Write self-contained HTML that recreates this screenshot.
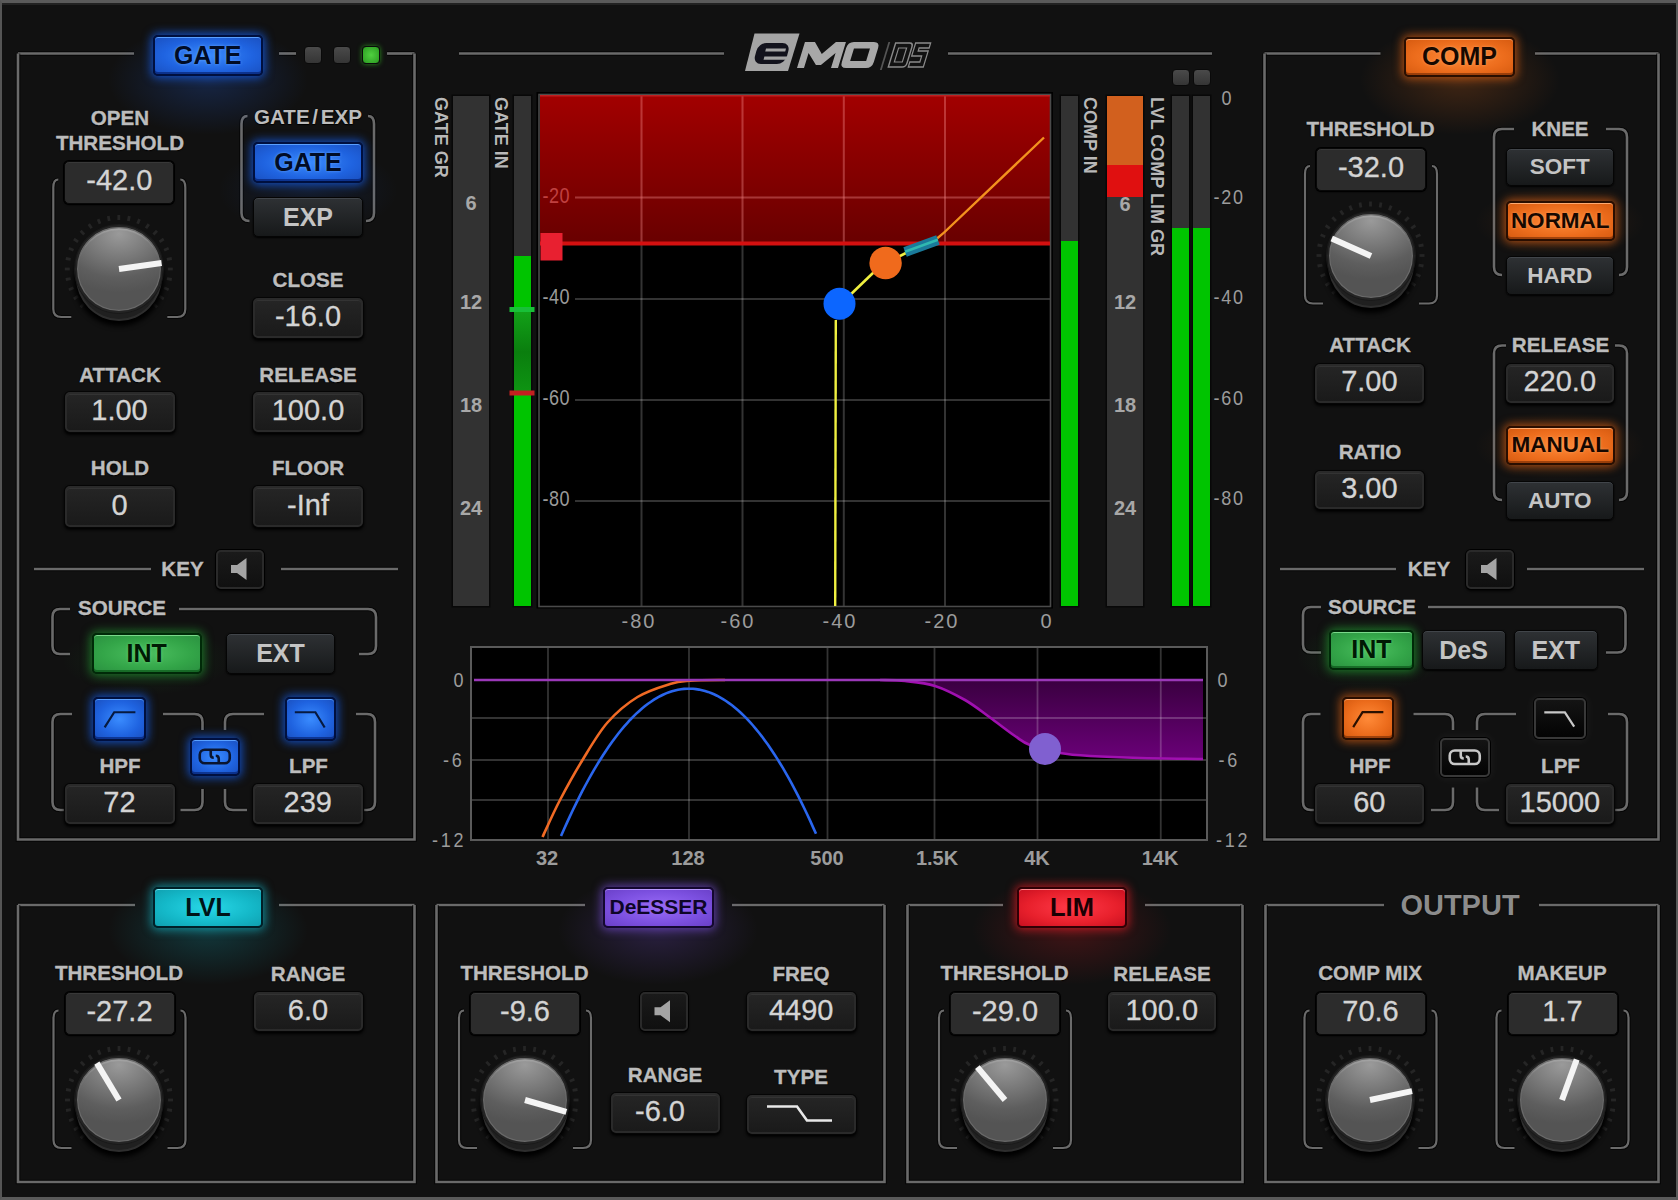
<!DOCTYPE html><html><head><meta charset="utf-8"><style>
*{margin:0;padding:0;box-sizing:border-box}
html,body{width:1678px;height:1200px;overflow:hidden;background:#111111}
body{position:relative;font-family:"Liberation Sans",sans-serif}
.t{position:absolute;white-space:nowrap;line-height:1}
.vb,.vbf,.b{position:absolute;text-align:center;white-space:nowrap;border-radius:5px}
.vb{background:linear-gradient(#252525,#1a1a1a);border:2px solid #2a2a2a;box-shadow:0 0 0 1px #050505,0 2px 3px 1px #000,inset 0 1px 0 #333;color:#d4d4d4;-webkit-text-stroke:0.3px #d4d4d4}
.vbf{background:#2c2c2c;border:1.5px solid #080808;box-shadow:0 0 0 1px #000,0 1px 2px #000,inset 0 1px 0 #383838;color:#d4d4d4;-webkit-text-stroke:0.3px #d4d4d4}
.b{font-weight:bold;border:1.5px solid #050505}
.b.blue,.b.orange,.b.green,.b.cyan,.b.purple,.b.red{border-width:2px}
.b.blue{text-shadow:0 0 3px rgba(110,170,255,.8)}
.b.orange{text-shadow:0 0 3px rgba(255,170,110,.7)}
.b.green{text-shadow:0 0 3px rgba(120,230,140,.6)}
.b.off{background:linear-gradient(#2e3134,#17191a);box-shadow:inset 0 1px 0 #41454a,0 1px 2px #000;color:#c4c4c4}
.b.blue{background:radial-gradient(ellipse at center,#3a8cff 0%,#1f63e0 60%,#1a50c0 100%);border-color:#001040;color:#000c26;box-shadow:0 0 10px 2px rgba(20,100,255,.7),inset 0 1px 0 #5aa0ff,inset 0 -2px 0 rgba(0,20,90,.55)}
.b.orange{background:radial-gradient(ellipse at center,#ff8a38 0%,#ec6c1c 60%,#d55a10 100%);border-color:#2a0e00;color:#160800;box-shadow:0 0 10px 2px rgba(255,110,20,.6),inset 0 1px 0 #ffaa70,inset 0 -2px 0 rgba(90,30,0,.5)}
.b.green{background:radial-gradient(ellipse at center,#4cc060 0%,#33a548 60%,#2a9040 100%);border-color:#002a08;color:#001a04;box-shadow:0 0 10px 2px rgba(40,200,60,.5),inset 0 1px 0 #7ad88a,inset 0 -2px 0 rgba(0,60,10,.5)}
.b.cyan{background:radial-gradient(ellipse at center,#28d8e8 0%,#14b8c8 60%,#10a0b0 100%);border-color:#002028;color:#001418;box-shadow:0 0 10px 2px rgba(20,210,230,.55),inset 0 1px 0 #80eef8}
.b.purple{background:radial-gradient(ellipse at center,#9a6cf8 0%,#7c50e0 60%,#6a40c8 100%);border-color:#140830;color:#0e0628;box-shadow:0 0 10px 2px rgba(140,90,255,.55),inset 0 1px 0 #b898ff}
.b.red{background:radial-gradient(ellipse at center,#ff3a48 0%,#e8202c 60%,#c81020 100%);border-color:#300005;color:#1a0003;box-shadow:0 0 10px 2px rgba(255,30,40,.6),inset 0 1px 0 #ff8a90}
.b.black{background:linear-gradient(#141414,#030303);border:2.5px solid #383838;box-shadow:0 0 0 1px #000,0 0 10px 2px rgba(255,255,255,.05)}
.led{position:absolute;width:18px;height:18px;border-radius:4px;background:linear-gradient(#4a4a4a,#353535);border:1px solid #0a0a0a}
.led.gn{background:radial-gradient(#50d040,#2a9a20);box-shadow:0 0 5px rgba(60,220,40,.6)}
.kn{position:absolute;border-radius:50%;background:radial-gradient(ellipse 90% 70% at 50% 8%,#9a9a9a 0%,#7a7a7a 40%,#5e5e5e 75%,#545454 100%);border:2.5px solid #242424;box-shadow:inset 0 0 0 1.2px #6a6a6a,inset 0 3px 1px rgba(255,255,255,.15),0 0 0 1px #1a1a1a}
.ks{position:absolute;border-radius:50%;background:#202020;border:2px solid #2e2e2e;box-shadow:0 3px 5px 2px #000}
.kp{position:absolute;width:6px;background:#f4f4f4;transform-origin:50% 100%}
.vt{writing-mode:vertical-rl;font-weight:bold;color:#b8b8b8;line-height:1;text-shadow:0 0 1px #000}
.spk{position:absolute;border-radius:5px;background:linear-gradient(#1a1a1a,#101010);border:2px solid #2a2a2a;box-shadow:0 0 0 1px #000,0 2px 3px #000}
</style></head><body><div style="position:absolute;left:0;top:0;width:1678px;height:1200px;border-top:3px solid #5a5a5a;border-left:2px solid #555;border-right:2px solid #5a5a5a;border-bottom:3px solid #5a5a5a"></div><div style="position:absolute;left:2px;top:3px;width:1674px;height:2px;background:#222"></div><svg width="1678" height="1200" style="position:absolute;left:0;top:0"><line x1="18" y1="53.5" x2="134" y2="53.5" stroke="#000" stroke-width="4.7" stroke-opacity=".7"/><line x1="18" y1="53.5" x2="134" y2="53.5" stroke="#6a6a6a" stroke-width="2.7"/><line x1="279" y1="53.5" x2="296" y2="53.5" stroke="#000" stroke-width="4.7" stroke-opacity=".7"/><line x1="279" y1="53.5" x2="296" y2="53.5" stroke="#6a6a6a" stroke-width="2.7"/><line x1="387" y1="53.5" x2="414.5" y2="53.5" stroke="#000" stroke-width="4.7" stroke-opacity=".7"/><line x1="387" y1="53.5" x2="414.5" y2="53.5" stroke="#6a6a6a" stroke-width="2.7"/><path d="M414.5,53.5 L414.5,839.5 L18,839.5 L18,53.5" fill="none" stroke="#000" stroke-width="4.6" stroke-opacity=".7"/><path d="M414.5,53.5 L414.5,839.5 L18,839.5 L18,53.5" fill="none" stroke="#6a6a6a" stroke-width="2.6"/><line x1="1264.5" y1="53.5" x2="1380.5" y2="53.5" stroke="#000" stroke-width="4.7" stroke-opacity=".7"/><line x1="1264.5" y1="53.5" x2="1380.5" y2="53.5" stroke="#6a6a6a" stroke-width="2.7"/><line x1="1535" y1="53.5" x2="1658.5" y2="53.5" stroke="#000" stroke-width="4.7" stroke-opacity=".7"/><line x1="1535" y1="53.5" x2="1658.5" y2="53.5" stroke="#6a6a6a" stroke-width="2.7"/><path d="M1658.5,53.5 L1658.5,839.5 L1264.5,839.5 L1264.5,53.5" fill="none" stroke="#000" stroke-width="4.6" stroke-opacity=".7"/><path d="M1658.5,53.5 L1658.5,839.5 L1264.5,839.5 L1264.5,53.5" fill="none" stroke="#6a6a6a" stroke-width="2.6"/><line x1="18" y1="905" x2="135" y2="905" stroke="#000" stroke-width="4.7" stroke-opacity=".7"/><line x1="18" y1="905" x2="135" y2="905" stroke="#6a6a6a" stroke-width="2.7"/><line x1="279" y1="905" x2="414.5" y2="905" stroke="#000" stroke-width="4.7" stroke-opacity=".7"/><line x1="279" y1="905" x2="414.5" y2="905" stroke="#6a6a6a" stroke-width="2.7"/><path d="M414.5,905 L414.5,1182 L18,1182 L18,905" fill="none" stroke="#000" stroke-width="4.6" stroke-opacity=".7"/><path d="M414.5,905 L414.5,1182 L18,1182 L18,905" fill="none" stroke="#6a6a6a" stroke-width="2.6"/><line x1="436.5" y1="905" x2="585" y2="905" stroke="#000" stroke-width="4.7" stroke-opacity=".7"/><line x1="436.5" y1="905" x2="585" y2="905" stroke="#6a6a6a" stroke-width="2.7"/><line x1="732" y1="905" x2="884.5" y2="905" stroke="#000" stroke-width="4.7" stroke-opacity=".7"/><line x1="732" y1="905" x2="884.5" y2="905" stroke="#6a6a6a" stroke-width="2.7"/><path d="M884.5,905 L884.5,1182 L436.5,1182 L436.5,905" fill="none" stroke="#000" stroke-width="4.6" stroke-opacity=".7"/><path d="M884.5,905 L884.5,1182 L436.5,1182 L436.5,905" fill="none" stroke="#6a6a6a" stroke-width="2.6"/><line x1="907.5" y1="905" x2="1003" y2="905" stroke="#000" stroke-width="4.7" stroke-opacity=".7"/><line x1="907.5" y1="905" x2="1003" y2="905" stroke="#6a6a6a" stroke-width="2.7"/><line x1="1145" y1="905" x2="1242.5" y2="905" stroke="#000" stroke-width="4.7" stroke-opacity=".7"/><line x1="1145" y1="905" x2="1242.5" y2="905" stroke="#6a6a6a" stroke-width="2.7"/><path d="M1242.5,905 L1242.5,1182 L907.5,1182 L907.5,905" fill="none" stroke="#000" stroke-width="4.6" stroke-opacity=".7"/><path d="M1242.5,905 L1242.5,1182 L907.5,1182 L907.5,905" fill="none" stroke="#6a6a6a" stroke-width="2.6"/><line x1="1265.5" y1="905" x2="1384" y2="905" stroke="#000" stroke-width="4.7" stroke-opacity=".7"/><line x1="1265.5" y1="905" x2="1384" y2="905" stroke="#6a6a6a" stroke-width="2.7"/><line x1="1539" y1="905" x2="1658.5" y2="905" stroke="#000" stroke-width="4.7" stroke-opacity=".7"/><line x1="1539" y1="905" x2="1658.5" y2="905" stroke="#6a6a6a" stroke-width="2.7"/><path d="M1658.5,905 L1658.5,1182 L1265.5,1182 L1265.5,905" fill="none" stroke="#000" stroke-width="4.6" stroke-opacity=".7"/><path d="M1658.5,905 L1658.5,1182 L1265.5,1182 L1265.5,905" fill="none" stroke="#6a6a6a" stroke-width="2.6"/><line x1="459" y1="53.5" x2="724" y2="53.5" stroke="#000" stroke-width="4.7" stroke-opacity=".7"/><line x1="459" y1="53.5" x2="724" y2="53.5" stroke="#6a6a6a" stroke-width="2.7"/><line x1="948" y1="53.5" x2="1212" y2="53.5" stroke="#000" stroke-width="4.7" stroke-opacity=".7"/><line x1="948" y1="53.5" x2="1212" y2="53.5" stroke="#6a6a6a" stroke-width="2.7"/><path d="M58.3,179.5 Q53.3,179.5 53.3,187.5 L53.3,309 Q53.3,317 61.3,317 L71.3,317" fill="none" stroke="#000" stroke-width="4.2" stroke-opacity=".7"/><path d="M58.3,179.5 Q53.3,179.5 53.3,187.5 L53.3,309 Q53.3,317 61.3,317 L71.3,317" fill="none" stroke="#6a6a6a" stroke-width="2.2"/><path d="M180.3,179.5 Q185.3,179.5 185.3,187.5 L185.3,309 Q185.3,317 177.3,317 L167.3,317" fill="none" stroke="#000" stroke-width="4.2" stroke-opacity=".7"/><path d="M180.3,179.5 Q185.3,179.5 185.3,187.5 L185.3,309 Q185.3,317 177.3,317 L167.3,317" fill="none" stroke="#6a6a6a" stroke-width="2.2"/><line x1="84.2" y1="303.6" x2="80.6" y2="307.2" stroke="#252525" stroke-width="2.8"/><line x1="78.1" y1="296.2" x2="73.9" y2="299.0" stroke="#252525" stroke-width="2.8"/><line x1="73.5" y1="287.8" x2="68.9" y2="289.7" stroke="#252525" stroke-width="2.8"/><line x1="70.7" y1="278.6" x2="65.8" y2="279.5" stroke="#252525" stroke-width="2.8"/><line x1="69.8" y1="269.0" x2="64.8" y2="269.0" stroke="#252525" stroke-width="2.8"/><line x1="70.7" y1="259.4" x2="65.8" y2="258.5" stroke="#252525" stroke-width="2.8"/><line x1="73.5" y1="250.2" x2="68.9" y2="248.3" stroke="#252525" stroke-width="2.8"/><line x1="78.1" y1="241.8" x2="73.9" y2="239.0" stroke="#252525" stroke-width="2.8"/><line x1="84.2" y1="234.4" x2="80.6" y2="230.8" stroke="#252525" stroke-width="2.8"/><line x1="91.6" y1="228.3" x2="88.8" y2="224.1" stroke="#252525" stroke-width="2.8"/><line x1="100.0" y1="223.7" x2="98.1" y2="219.1" stroke="#252525" stroke-width="2.8"/><line x1="109.2" y1="220.9" x2="108.3" y2="216.0" stroke="#252525" stroke-width="2.8"/><line x1="118.8" y1="220.0" x2="118.8" y2="215.0" stroke="#252525" stroke-width="2.8"/><line x1="128.4" y1="220.9" x2="129.3" y2="216.0" stroke="#252525" stroke-width="2.8"/><line x1="137.6" y1="223.7" x2="139.5" y2="219.1" stroke="#252525" stroke-width="2.8"/><line x1="146.0" y1="228.3" x2="148.8" y2="224.1" stroke="#252525" stroke-width="2.8"/><line x1="153.4" y1="234.4" x2="157.0" y2="230.8" stroke="#252525" stroke-width="2.8"/><line x1="159.5" y1="241.8" x2="163.7" y2="239.0" stroke="#252525" stroke-width="2.8"/><line x1="164.1" y1="250.2" x2="168.7" y2="248.3" stroke="#252525" stroke-width="2.8"/><line x1="166.9" y1="259.4" x2="171.8" y2="258.5" stroke="#252525" stroke-width="2.8"/><line x1="167.8" y1="269.0" x2="172.8" y2="269.0" stroke="#252525" stroke-width="2.8"/><line x1="166.9" y1="278.6" x2="171.8" y2="279.5" stroke="#252525" stroke-width="2.8"/><line x1="164.1" y1="287.8" x2="168.7" y2="289.7" stroke="#252525" stroke-width="2.8"/><line x1="159.5" y1="296.2" x2="163.7" y2="299.0" stroke="#252525" stroke-width="2.8"/><line x1="153.4" y1="303.6" x2="157.0" y2="307.2" stroke="#252525" stroke-width="2.8"/><path d="M247.5,116 Q241.5,116 241.5,124 L241.5,213 Q241.5,221 249.5,221 L249.5,221" fill="none" stroke="#000" stroke-width="4.6" stroke-opacity=".7"/><path d="M247.5,116 Q241.5,116 241.5,124 L241.5,213 Q241.5,221 249.5,221 L249.5,221" fill="none" stroke="#6a6a6a" stroke-width="2.6"/><path d="M368,116 Q374,116 374,124 L374,213 Q374,221 366,221 L366,221" fill="none" stroke="#000" stroke-width="4.6" stroke-opacity=".7"/><path d="M368,116 Q374,116 374,124 L374,213 Q374,221 366,221 L366,221" fill="none" stroke="#6a6a6a" stroke-width="2.6"/><line x1="34" y1="569" x2="151" y2="569" stroke="#000" stroke-width="4.7" stroke-opacity=".7"/><line x1="34" y1="569" x2="151" y2="569" stroke="#6a6a6a" stroke-width="2.7"/><line x1="281" y1="569" x2="398" y2="569" stroke="#000" stroke-width="4.7" stroke-opacity=".7"/><line x1="281" y1="569" x2="398" y2="569" stroke="#6a6a6a" stroke-width="2.7"/><path d="M70,609 L60,609 Q52.5,609 52.5,617 L52.5,646 Q52.5,654 60,654 L70,654" fill="none" stroke="#000" stroke-width="4.6" stroke-opacity=".7"/><path d="M70,609 L60,609 Q52.5,609 52.5,617 L52.5,646 Q52.5,654 60,654 L70,654" fill="none" stroke="#6a6a6a" stroke-width="2.6"/><path d="M179,609 L368,609 Q376,609 376,617 L376,646 Q376,654 368,654 L359,654" fill="none" stroke="#000" stroke-width="4.6" stroke-opacity=".7"/><path d="M179,609 L368,609 Q376,609 376,617 L376,646 Q376,654 368,654 L359,654" fill="none" stroke="#6a6a6a" stroke-width="2.6"/><path d="M72,714 L60.5,714 Q52.5,714 52.5,722 L52.5,802 Q52.5,810 60.5,810 L70.5,810" fill="none" stroke="#000" stroke-width="4.6" stroke-opacity=".7"/><path d="M72,714 L60.5,714 Q52.5,714 52.5,722 L52.5,802 Q52.5,810 60.5,810 L70.5,810" fill="none" stroke="#6a6a6a" stroke-width="2.6"/><path d="M163,714 L194.5,714 Q202.5,714 202.5,722 L202.5,730" fill="none" stroke="#000" stroke-width="4.6" stroke-opacity=".7"/><path d="M163,714 L194.5,714 Q202.5,714 202.5,722 L202.5,730" fill="none" stroke="#6a6a6a" stroke-width="2.6"/><path d="M202.5,789 L202.5,802 Q202.5,810 194.5,810 L180.5,810" fill="none" stroke="#000" stroke-width="4.6" stroke-opacity=".7"/><path d="M202.5,789 L202.5,802 Q202.5,810 194.5,810 L180.5,810" fill="none" stroke="#6a6a6a" stroke-width="2.6"/><path d="M264,714 L233,714 Q225,714 225,722 L225,730" fill="none" stroke="#000" stroke-width="4.6" stroke-opacity=".7"/><path d="M264,714 L233,714 Q225,714 225,722 L225,730" fill="none" stroke="#6a6a6a" stroke-width="2.6"/><path d="M225,789 L225,802 Q225,810 233,810 L247,810" fill="none" stroke="#000" stroke-width="4.6" stroke-opacity=".7"/><path d="M225,789 L225,802 Q225,810 233,810 L247,810" fill="none" stroke="#6a6a6a" stroke-width="2.6"/><path d="M356,714 L367,714 Q375,714 375,722 L375,802 Q375,810 367,810 L357,810" fill="none" stroke="#000" stroke-width="4.6" stroke-opacity=".7"/><path d="M356,714 L367,714 Q375,714 375,722 L375,802 Q375,810 367,810 L357,810" fill="none" stroke="#6a6a6a" stroke-width="2.6"/><path d="M1310.0,166.0 Q1305.0,166.0 1305.0,174.0 L1305.0,295.5 Q1305.0,303.5 1313.0,303.5 L1323.0,303.5" fill="none" stroke="#000" stroke-width="4.2" stroke-opacity=".7"/><path d="M1310.0,166.0 Q1305.0,166.0 1305.0,174.0 L1305.0,295.5 Q1305.0,303.5 1313.0,303.5 L1323.0,303.5" fill="none" stroke="#6a6a6a" stroke-width="2.2"/><path d="M1432.0,166.0 Q1437.0,166.0 1437.0,174.0 L1437.0,295.5 Q1437.0,303.5 1429.0,303.5 L1419.0,303.5" fill="none" stroke="#000" stroke-width="4.2" stroke-opacity=".7"/><path d="M1432.0,166.0 Q1437.0,166.0 1437.0,174.0 L1437.0,295.5 Q1437.0,303.5 1429.0,303.5 L1419.0,303.5" fill="none" stroke="#6a6a6a" stroke-width="2.2"/><line x1="1335.9" y1="290.1" x2="1332.3" y2="293.7" stroke="#252525" stroke-width="2.8"/><line x1="1329.8" y1="282.7" x2="1325.6" y2="285.5" stroke="#252525" stroke-width="2.8"/><line x1="1325.2" y1="274.3" x2="1320.6" y2="276.2" stroke="#252525" stroke-width="2.8"/><line x1="1322.4" y1="265.1" x2="1317.5" y2="266.0" stroke="#252525" stroke-width="2.8"/><line x1="1321.5" y1="255.5" x2="1316.5" y2="255.5" stroke="#252525" stroke-width="2.8"/><line x1="1322.4" y1="245.9" x2="1317.5" y2="245.0" stroke="#252525" stroke-width="2.8"/><line x1="1325.2" y1="236.7" x2="1320.6" y2="234.8" stroke="#252525" stroke-width="2.8"/><line x1="1329.8" y1="228.3" x2="1325.6" y2="225.5" stroke="#252525" stroke-width="2.8"/><line x1="1335.9" y1="220.9" x2="1332.3" y2="217.3" stroke="#252525" stroke-width="2.8"/><line x1="1343.3" y1="214.8" x2="1340.5" y2="210.6" stroke="#252525" stroke-width="2.8"/><line x1="1351.7" y1="210.2" x2="1349.8" y2="205.6" stroke="#252525" stroke-width="2.8"/><line x1="1360.9" y1="207.4" x2="1360.0" y2="202.5" stroke="#252525" stroke-width="2.8"/><line x1="1370.5" y1="206.5" x2="1370.5" y2="201.5" stroke="#252525" stroke-width="2.8"/><line x1="1380.1" y1="207.4" x2="1381.0" y2="202.5" stroke="#252525" stroke-width="2.8"/><line x1="1389.3" y1="210.2" x2="1391.2" y2="205.6" stroke="#252525" stroke-width="2.8"/><line x1="1397.7" y1="214.8" x2="1400.5" y2="210.6" stroke="#252525" stroke-width="2.8"/><line x1="1405.1" y1="220.9" x2="1408.7" y2="217.3" stroke="#252525" stroke-width="2.8"/><line x1="1411.2" y1="228.3" x2="1415.4" y2="225.5" stroke="#252525" stroke-width="2.8"/><line x1="1415.8" y1="236.7" x2="1420.4" y2="234.8" stroke="#252525" stroke-width="2.8"/><line x1="1418.6" y1="245.9" x2="1423.5" y2="245.0" stroke="#252525" stroke-width="2.8"/><line x1="1419.5" y1="255.5" x2="1424.5" y2="255.5" stroke="#252525" stroke-width="2.8"/><line x1="1418.6" y1="265.1" x2="1423.5" y2="266.0" stroke="#252525" stroke-width="2.8"/><line x1="1415.8" y1="274.3" x2="1420.4" y2="276.2" stroke="#252525" stroke-width="2.8"/><line x1="1411.2" y1="282.7" x2="1415.4" y2="285.5" stroke="#252525" stroke-width="2.8"/><line x1="1405.1" y1="290.1" x2="1408.7" y2="293.7" stroke="#252525" stroke-width="2.8"/><path d="M1514,129 L1502,129 Q1494,129 1494,137 L1494,267 Q1494,275 1502,275" fill="none" stroke="#000" stroke-width="4.6" stroke-opacity=".7"/><path d="M1514,129 L1502,129 Q1494,129 1494,137 L1494,267 Q1494,275 1502,275" fill="none" stroke="#6a6a6a" stroke-width="2.6"/><path d="M1606,129 L1619,129 Q1627,129 1627,137 L1627,267 Q1627,275 1619,275" fill="none" stroke="#000" stroke-width="4.6" stroke-opacity=".7"/><path d="M1606,129 L1619,129 Q1627,129 1627,137 L1627,267 Q1627,275 1619,275" fill="none" stroke="#6a6a6a" stroke-width="2.6"/><path d="M1506,345.5 L1502,345.5 Q1494,345.5 1494,353.5 L1494,492 Q1494,500 1502,500" fill="none" stroke="#000" stroke-width="4.6" stroke-opacity=".7"/><path d="M1506,345.5 L1502,345.5 Q1494,345.5 1494,353.5 L1494,492 Q1494,500 1502,500" fill="none" stroke="#6a6a6a" stroke-width="2.6"/><path d="M1615,345.5 L1619,345.5 Q1627,345.5 1627,353.5 L1627,492 Q1627,500 1619,500" fill="none" stroke="#000" stroke-width="4.6" stroke-opacity=".7"/><path d="M1615,345.5 L1619,345.5 Q1627,345.5 1627,353.5 L1627,492 Q1627,500 1619,500" fill="none" stroke="#6a6a6a" stroke-width="2.6"/><line x1="1280" y1="569" x2="1396" y2="569" stroke="#000" stroke-width="4.7" stroke-opacity=".7"/><line x1="1280" y1="569" x2="1396" y2="569" stroke="#6a6a6a" stroke-width="2.7"/><line x1="1527" y1="569" x2="1644" y2="569" stroke="#000" stroke-width="4.7" stroke-opacity=".7"/><line x1="1527" y1="569" x2="1644" y2="569" stroke="#6a6a6a" stroke-width="2.7"/><path d="M1321,607 L1311,607 Q1303,607 1303,615 L1303,644.5 Q1303,652.5 1311,652.5 L1321,652.5" fill="none" stroke="#000" stroke-width="4.6" stroke-opacity=".7"/><path d="M1321,607 L1311,607 Q1303,607 1303,615 L1303,644.5 Q1303,652.5 1311,652.5 L1321,652.5" fill="none" stroke="#6a6a6a" stroke-width="2.6"/><path d="M1428,607 L1617.5,607 Q1625.5,607 1625.5,615 L1625.5,644.5 Q1625.5,652.5 1617.5,652.5 L1606,652.5" fill="none" stroke="#000" stroke-width="4.6" stroke-opacity=".7"/><path d="M1428,607 L1617.5,607 Q1625.5,607 1625.5,615 L1625.5,644.5 Q1625.5,652.5 1617.5,652.5 L1606,652.5" fill="none" stroke="#6a6a6a" stroke-width="2.6"/><path d="M1320.5,714 L1311,714 Q1303,714 1303,722 L1303,802 Q1303,810 1311,810 L1321,810" fill="none" stroke="#000" stroke-width="4.6" stroke-opacity=".7"/><path d="M1320.5,714 L1311,714 Q1303,714 1303,722 L1303,802 Q1303,810 1311,810 L1321,810" fill="none" stroke="#6a6a6a" stroke-width="2.6"/><path d="M1413.5,714 L1445,714 Q1453,714 1453,722 L1453,730" fill="none" stroke="#000" stroke-width="4.6" stroke-opacity=".7"/><path d="M1413.5,714 L1445,714 Q1453,714 1453,722 L1453,730" fill="none" stroke="#6a6a6a" stroke-width="2.6"/><path d="M1453,787.5 L1453,802 Q1453,810 1445,810 L1431,810" fill="none" stroke="#000" stroke-width="4.6" stroke-opacity=".7"/><path d="M1453,787.5 L1453,802 Q1453,810 1445,810 L1431,810" fill="none" stroke="#6a6a6a" stroke-width="2.6"/><path d="M1516,714 L1485,714 Q1477,714 1477,722 L1477,730" fill="none" stroke="#000" stroke-width="4.6" stroke-opacity=".7"/><path d="M1516,714 L1485,714 Q1477,714 1477,722 L1477,730" fill="none" stroke="#6a6a6a" stroke-width="2.6"/><path d="M1477,787.5 L1477,802 Q1477,810 1485,810 L1499,810" fill="none" stroke="#000" stroke-width="4.6" stroke-opacity=".7"/><path d="M1477,787.5 L1477,802 Q1477,810 1485,810 L1499,810" fill="none" stroke="#6a6a6a" stroke-width="2.6"/><path d="M1608,714 L1619,714 Q1627,714 1627,722 L1627,802 Q1627,810 1619,810 L1609,810" fill="none" stroke="#000" stroke-width="4.6" stroke-opacity=".7"/><path d="M1608,714 L1619,714 Q1627,714 1627,722 L1627,802 Q1627,810 1619,810 L1609,810" fill="none" stroke="#6a6a6a" stroke-width="2.6"/><path d="M58.5,1010.5 Q53.5,1010.5 53.5,1018.5 L53.5,1140 Q53.5,1148 61.5,1148 L71.5,1148" fill="none" stroke="#000" stroke-width="4.2" stroke-opacity=".7"/><path d="M58.5,1010.5 Q53.5,1010.5 53.5,1018.5 L53.5,1140 Q53.5,1148 61.5,1148 L71.5,1148" fill="none" stroke="#6a6a6a" stroke-width="2.2"/><path d="M180.5,1010.5 Q185.5,1010.5 185.5,1018.5 L185.5,1140 Q185.5,1148 177.5,1148 L167.5,1148" fill="none" stroke="#000" stroke-width="4.2" stroke-opacity=".7"/><path d="M180.5,1010.5 Q185.5,1010.5 185.5,1018.5 L185.5,1140 Q185.5,1148 177.5,1148 L167.5,1148" fill="none" stroke="#6a6a6a" stroke-width="2.2"/><line x1="84.4" y1="1134.6" x2="80.8" y2="1138.2" stroke="#252525" stroke-width="2.8"/><line x1="78.3" y1="1127.2" x2="74.1" y2="1130.0" stroke="#252525" stroke-width="2.8"/><line x1="73.7" y1="1118.8" x2="69.1" y2="1120.7" stroke="#252525" stroke-width="2.8"/><line x1="70.9" y1="1109.6" x2="66.0" y2="1110.5" stroke="#252525" stroke-width="2.8"/><line x1="70.0" y1="1100.0" x2="65.0" y2="1100.0" stroke="#252525" stroke-width="2.8"/><line x1="70.9" y1="1090.4" x2="66.0" y2="1089.5" stroke="#252525" stroke-width="2.8"/><line x1="73.7" y1="1081.2" x2="69.1" y2="1079.3" stroke="#252525" stroke-width="2.8"/><line x1="78.3" y1="1072.8" x2="74.1" y2="1070.0" stroke="#252525" stroke-width="2.8"/><line x1="84.4" y1="1065.4" x2="80.8" y2="1061.8" stroke="#252525" stroke-width="2.8"/><line x1="91.8" y1="1059.3" x2="89.0" y2="1055.1" stroke="#252525" stroke-width="2.8"/><line x1="100.2" y1="1054.7" x2="98.3" y2="1050.1" stroke="#252525" stroke-width="2.8"/><line x1="109.4" y1="1051.9" x2="108.5" y2="1047.0" stroke="#252525" stroke-width="2.8"/><line x1="119.0" y1="1051.0" x2="119.0" y2="1046.0" stroke="#252525" stroke-width="2.8"/><line x1="128.6" y1="1051.9" x2="129.5" y2="1047.0" stroke="#252525" stroke-width="2.8"/><line x1="137.8" y1="1054.7" x2="139.7" y2="1050.1" stroke="#252525" stroke-width="2.8"/><line x1="146.2" y1="1059.3" x2="149.0" y2="1055.1" stroke="#252525" stroke-width="2.8"/><line x1="153.6" y1="1065.4" x2="157.2" y2="1061.8" stroke="#252525" stroke-width="2.8"/><line x1="159.7" y1="1072.8" x2="163.9" y2="1070.0" stroke="#252525" stroke-width="2.8"/><line x1="164.3" y1="1081.2" x2="168.9" y2="1079.3" stroke="#252525" stroke-width="2.8"/><line x1="167.1" y1="1090.4" x2="172.0" y2="1089.5" stroke="#252525" stroke-width="2.8"/><line x1="168.0" y1="1100.0" x2="173.0" y2="1100.0" stroke="#252525" stroke-width="2.8"/><line x1="167.1" y1="1109.6" x2="172.0" y2="1110.5" stroke="#252525" stroke-width="2.8"/><line x1="164.3" y1="1118.8" x2="168.9" y2="1120.7" stroke="#252525" stroke-width="2.8"/><line x1="159.7" y1="1127.2" x2="163.9" y2="1130.0" stroke="#252525" stroke-width="2.8"/><line x1="153.6" y1="1134.6" x2="157.2" y2="1138.2" stroke="#252525" stroke-width="2.8"/><path d="M464.0,1010.5 Q459.0,1010.5 459.0,1018.5 L459.0,1140 Q459.0,1148 467.0,1148 L477.0,1148" fill="none" stroke="#000" stroke-width="4.2" stroke-opacity=".7"/><path d="M464.0,1010.5 Q459.0,1010.5 459.0,1018.5 L459.0,1140 Q459.0,1148 467.0,1148 L477.0,1148" fill="none" stroke="#6a6a6a" stroke-width="2.2"/><path d="M586.0,1010.5 Q591.0,1010.5 591.0,1018.5 L591.0,1140 Q591.0,1148 583.0,1148 L573.0,1148" fill="none" stroke="#000" stroke-width="4.2" stroke-opacity=".7"/><path d="M586.0,1010.5 Q591.0,1010.5 591.0,1018.5 L591.0,1140 Q591.0,1148 583.0,1148 L573.0,1148" fill="none" stroke="#6a6a6a" stroke-width="2.2"/><line x1="489.9" y1="1134.6" x2="486.3" y2="1138.2" stroke="#252525" stroke-width="2.8"/><line x1="483.8" y1="1127.2" x2="479.6" y2="1130.0" stroke="#252525" stroke-width="2.8"/><line x1="479.2" y1="1118.8" x2="474.6" y2="1120.7" stroke="#252525" stroke-width="2.8"/><line x1="476.4" y1="1109.6" x2="471.5" y2="1110.5" stroke="#252525" stroke-width="2.8"/><line x1="475.5" y1="1100.0" x2="470.5" y2="1100.0" stroke="#252525" stroke-width="2.8"/><line x1="476.4" y1="1090.4" x2="471.5" y2="1089.5" stroke="#252525" stroke-width="2.8"/><line x1="479.2" y1="1081.2" x2="474.6" y2="1079.3" stroke="#252525" stroke-width="2.8"/><line x1="483.8" y1="1072.8" x2="479.6" y2="1070.0" stroke="#252525" stroke-width="2.8"/><line x1="489.9" y1="1065.4" x2="486.3" y2="1061.8" stroke="#252525" stroke-width="2.8"/><line x1="497.3" y1="1059.3" x2="494.5" y2="1055.1" stroke="#252525" stroke-width="2.8"/><line x1="505.7" y1="1054.7" x2="503.8" y2="1050.1" stroke="#252525" stroke-width="2.8"/><line x1="514.9" y1="1051.9" x2="514.0" y2="1047.0" stroke="#252525" stroke-width="2.8"/><line x1="524.5" y1="1051.0" x2="524.5" y2="1046.0" stroke="#252525" stroke-width="2.8"/><line x1="534.1" y1="1051.9" x2="535.0" y2="1047.0" stroke="#252525" stroke-width="2.8"/><line x1="543.3" y1="1054.7" x2="545.2" y2="1050.1" stroke="#252525" stroke-width="2.8"/><line x1="551.7" y1="1059.3" x2="554.5" y2="1055.1" stroke="#252525" stroke-width="2.8"/><line x1="559.1" y1="1065.4" x2="562.7" y2="1061.8" stroke="#252525" stroke-width="2.8"/><line x1="565.2" y1="1072.8" x2="569.4" y2="1070.0" stroke="#252525" stroke-width="2.8"/><line x1="569.8" y1="1081.2" x2="574.4" y2="1079.3" stroke="#252525" stroke-width="2.8"/><line x1="572.6" y1="1090.4" x2="577.5" y2="1089.5" stroke="#252525" stroke-width="2.8"/><line x1="573.5" y1="1100.0" x2="578.5" y2="1100.0" stroke="#252525" stroke-width="2.8"/><line x1="572.6" y1="1109.6" x2="577.5" y2="1110.5" stroke="#252525" stroke-width="2.8"/><line x1="569.8" y1="1118.8" x2="574.4" y2="1120.7" stroke="#252525" stroke-width="2.8"/><line x1="565.2" y1="1127.2" x2="569.4" y2="1130.0" stroke="#252525" stroke-width="2.8"/><line x1="559.1" y1="1134.6" x2="562.7" y2="1138.2" stroke="#252525" stroke-width="2.8"/><path d="M944.0,1010.5 Q939.0,1010.5 939.0,1018.5 L939.0,1140 Q939.0,1148 947.0,1148 L957.0,1148" fill="none" stroke="#000" stroke-width="4.2" stroke-opacity=".7"/><path d="M944.0,1010.5 Q939.0,1010.5 939.0,1018.5 L939.0,1140 Q939.0,1148 947.0,1148 L957.0,1148" fill="none" stroke="#6a6a6a" stroke-width="2.2"/><path d="M1066.0,1010.5 Q1071.0,1010.5 1071.0,1018.5 L1071.0,1140 Q1071.0,1148 1063.0,1148 L1053.0,1148" fill="none" stroke="#000" stroke-width="4.2" stroke-opacity=".7"/><path d="M1066.0,1010.5 Q1071.0,1010.5 1071.0,1018.5 L1071.0,1140 Q1071.0,1148 1063.0,1148 L1053.0,1148" fill="none" stroke="#6a6a6a" stroke-width="2.2"/><line x1="969.9" y1="1134.6" x2="966.3" y2="1138.2" stroke="#252525" stroke-width="2.8"/><line x1="963.8" y1="1127.2" x2="959.6" y2="1130.0" stroke="#252525" stroke-width="2.8"/><line x1="959.2" y1="1118.8" x2="954.6" y2="1120.7" stroke="#252525" stroke-width="2.8"/><line x1="956.4" y1="1109.6" x2="951.5" y2="1110.5" stroke="#252525" stroke-width="2.8"/><line x1="955.5" y1="1100.0" x2="950.5" y2="1100.0" stroke="#252525" stroke-width="2.8"/><line x1="956.4" y1="1090.4" x2="951.5" y2="1089.5" stroke="#252525" stroke-width="2.8"/><line x1="959.2" y1="1081.2" x2="954.6" y2="1079.3" stroke="#252525" stroke-width="2.8"/><line x1="963.8" y1="1072.8" x2="959.6" y2="1070.0" stroke="#252525" stroke-width="2.8"/><line x1="969.9" y1="1065.4" x2="966.3" y2="1061.8" stroke="#252525" stroke-width="2.8"/><line x1="977.3" y1="1059.3" x2="974.5" y2="1055.1" stroke="#252525" stroke-width="2.8"/><line x1="985.7" y1="1054.7" x2="983.8" y2="1050.1" stroke="#252525" stroke-width="2.8"/><line x1="994.9" y1="1051.9" x2="994.0" y2="1047.0" stroke="#252525" stroke-width="2.8"/><line x1="1004.5" y1="1051.0" x2="1004.5" y2="1046.0" stroke="#252525" stroke-width="2.8"/><line x1="1014.1" y1="1051.9" x2="1015.0" y2="1047.0" stroke="#252525" stroke-width="2.8"/><line x1="1023.3" y1="1054.7" x2="1025.2" y2="1050.1" stroke="#252525" stroke-width="2.8"/><line x1="1031.7" y1="1059.3" x2="1034.5" y2="1055.1" stroke="#252525" stroke-width="2.8"/><line x1="1039.1" y1="1065.4" x2="1042.7" y2="1061.8" stroke="#252525" stroke-width="2.8"/><line x1="1045.2" y1="1072.8" x2="1049.4" y2="1070.0" stroke="#252525" stroke-width="2.8"/><line x1="1049.8" y1="1081.2" x2="1054.4" y2="1079.3" stroke="#252525" stroke-width="2.8"/><line x1="1052.6" y1="1090.4" x2="1057.5" y2="1089.5" stroke="#252525" stroke-width="2.8"/><line x1="1053.5" y1="1100.0" x2="1058.5" y2="1100.0" stroke="#252525" stroke-width="2.8"/><line x1="1052.6" y1="1109.6" x2="1057.5" y2="1110.5" stroke="#252525" stroke-width="2.8"/><line x1="1049.8" y1="1118.8" x2="1054.4" y2="1120.7" stroke="#252525" stroke-width="2.8"/><line x1="1045.2" y1="1127.2" x2="1049.4" y2="1130.0" stroke="#252525" stroke-width="2.8"/><line x1="1039.1" y1="1134.6" x2="1042.7" y2="1138.2" stroke="#252525" stroke-width="2.8"/><path d="M1309.5,1010.5 Q1304.5,1010.5 1304.5,1018.5 L1304.5,1140 Q1304.5,1148 1312.5,1148 L1322.5,1148" fill="none" stroke="#000" stroke-width="4.2" stroke-opacity=".7"/><path d="M1309.5,1010.5 Q1304.5,1010.5 1304.5,1018.5 L1304.5,1140 Q1304.5,1148 1312.5,1148 L1322.5,1148" fill="none" stroke="#6a6a6a" stroke-width="2.2"/><path d="M1431.5,1010.5 Q1436.5,1010.5 1436.5,1018.5 L1436.5,1140 Q1436.5,1148 1428.5,1148 L1418.5,1148" fill="none" stroke="#000" stroke-width="4.2" stroke-opacity=".7"/><path d="M1431.5,1010.5 Q1436.5,1010.5 1436.5,1018.5 L1436.5,1140 Q1436.5,1148 1428.5,1148 L1418.5,1148" fill="none" stroke="#6a6a6a" stroke-width="2.2"/><line x1="1335.4" y1="1134.6" x2="1331.8" y2="1138.2" stroke="#252525" stroke-width="2.8"/><line x1="1329.3" y1="1127.2" x2="1325.1" y2="1130.0" stroke="#252525" stroke-width="2.8"/><line x1="1324.7" y1="1118.8" x2="1320.1" y2="1120.7" stroke="#252525" stroke-width="2.8"/><line x1="1321.9" y1="1109.6" x2="1317.0" y2="1110.5" stroke="#252525" stroke-width="2.8"/><line x1="1321.0" y1="1100.0" x2="1316.0" y2="1100.0" stroke="#252525" stroke-width="2.8"/><line x1="1321.9" y1="1090.4" x2="1317.0" y2="1089.5" stroke="#252525" stroke-width="2.8"/><line x1="1324.7" y1="1081.2" x2="1320.1" y2="1079.3" stroke="#252525" stroke-width="2.8"/><line x1="1329.3" y1="1072.8" x2="1325.1" y2="1070.0" stroke="#252525" stroke-width="2.8"/><line x1="1335.4" y1="1065.4" x2="1331.8" y2="1061.8" stroke="#252525" stroke-width="2.8"/><line x1="1342.8" y1="1059.3" x2="1340.0" y2="1055.1" stroke="#252525" stroke-width="2.8"/><line x1="1351.2" y1="1054.7" x2="1349.3" y2="1050.1" stroke="#252525" stroke-width="2.8"/><line x1="1360.4" y1="1051.9" x2="1359.5" y2="1047.0" stroke="#252525" stroke-width="2.8"/><line x1="1370.0" y1="1051.0" x2="1370.0" y2="1046.0" stroke="#252525" stroke-width="2.8"/><line x1="1379.6" y1="1051.9" x2="1380.5" y2="1047.0" stroke="#252525" stroke-width="2.8"/><line x1="1388.8" y1="1054.7" x2="1390.7" y2="1050.1" stroke="#252525" stroke-width="2.8"/><line x1="1397.2" y1="1059.3" x2="1400.0" y2="1055.1" stroke="#252525" stroke-width="2.8"/><line x1="1404.6" y1="1065.4" x2="1408.2" y2="1061.8" stroke="#252525" stroke-width="2.8"/><line x1="1410.7" y1="1072.8" x2="1414.9" y2="1070.0" stroke="#252525" stroke-width="2.8"/><line x1="1415.3" y1="1081.2" x2="1419.9" y2="1079.3" stroke="#252525" stroke-width="2.8"/><line x1="1418.1" y1="1090.4" x2="1423.0" y2="1089.5" stroke="#252525" stroke-width="2.8"/><line x1="1419.0" y1="1100.0" x2="1424.0" y2="1100.0" stroke="#252525" stroke-width="2.8"/><line x1="1418.1" y1="1109.6" x2="1423.0" y2="1110.5" stroke="#252525" stroke-width="2.8"/><line x1="1415.3" y1="1118.8" x2="1419.9" y2="1120.7" stroke="#252525" stroke-width="2.8"/><line x1="1410.7" y1="1127.2" x2="1414.9" y2="1130.0" stroke="#252525" stroke-width="2.8"/><line x1="1404.6" y1="1134.6" x2="1408.2" y2="1138.2" stroke="#252525" stroke-width="2.8"/><path d="M1501.5,1010.5 Q1496.5,1010.5 1496.5,1018.5 L1496.5,1140 Q1496.5,1148 1504.5,1148 L1514.5,1148" fill="none" stroke="#000" stroke-width="4.2" stroke-opacity=".7"/><path d="M1501.5,1010.5 Q1496.5,1010.5 1496.5,1018.5 L1496.5,1140 Q1496.5,1148 1504.5,1148 L1514.5,1148" fill="none" stroke="#6a6a6a" stroke-width="2.2"/><path d="M1623.5,1010.5 Q1628.5,1010.5 1628.5,1018.5 L1628.5,1140 Q1628.5,1148 1620.5,1148 L1610.5,1148" fill="none" stroke="#000" stroke-width="4.2" stroke-opacity=".7"/><path d="M1623.5,1010.5 Q1628.5,1010.5 1628.5,1018.5 L1628.5,1140 Q1628.5,1148 1620.5,1148 L1610.5,1148" fill="none" stroke="#6a6a6a" stroke-width="2.2"/><line x1="1527.4" y1="1134.6" x2="1523.8" y2="1138.2" stroke="#252525" stroke-width="2.8"/><line x1="1521.3" y1="1127.2" x2="1517.1" y2="1130.0" stroke="#252525" stroke-width="2.8"/><line x1="1516.7" y1="1118.8" x2="1512.1" y2="1120.7" stroke="#252525" stroke-width="2.8"/><line x1="1513.9" y1="1109.6" x2="1509.0" y2="1110.5" stroke="#252525" stroke-width="2.8"/><line x1="1513.0" y1="1100.0" x2="1508.0" y2="1100.0" stroke="#252525" stroke-width="2.8"/><line x1="1513.9" y1="1090.4" x2="1509.0" y2="1089.5" stroke="#252525" stroke-width="2.8"/><line x1="1516.7" y1="1081.2" x2="1512.1" y2="1079.3" stroke="#252525" stroke-width="2.8"/><line x1="1521.3" y1="1072.8" x2="1517.1" y2="1070.0" stroke="#252525" stroke-width="2.8"/><line x1="1527.4" y1="1065.4" x2="1523.8" y2="1061.8" stroke="#252525" stroke-width="2.8"/><line x1="1534.8" y1="1059.3" x2="1532.0" y2="1055.1" stroke="#252525" stroke-width="2.8"/><line x1="1543.2" y1="1054.7" x2="1541.3" y2="1050.1" stroke="#252525" stroke-width="2.8"/><line x1="1552.4" y1="1051.9" x2="1551.5" y2="1047.0" stroke="#252525" stroke-width="2.8"/><line x1="1562.0" y1="1051.0" x2="1562.0" y2="1046.0" stroke="#252525" stroke-width="2.8"/><line x1="1571.6" y1="1051.9" x2="1572.5" y2="1047.0" stroke="#252525" stroke-width="2.8"/><line x1="1580.8" y1="1054.7" x2="1582.7" y2="1050.1" stroke="#252525" stroke-width="2.8"/><line x1="1589.2" y1="1059.3" x2="1592.0" y2="1055.1" stroke="#252525" stroke-width="2.8"/><line x1="1596.6" y1="1065.4" x2="1600.2" y2="1061.8" stroke="#252525" stroke-width="2.8"/><line x1="1602.7" y1="1072.8" x2="1606.9" y2="1070.0" stroke="#252525" stroke-width="2.8"/><line x1="1607.3" y1="1081.2" x2="1611.9" y2="1079.3" stroke="#252525" stroke-width="2.8"/><line x1="1610.1" y1="1090.4" x2="1615.0" y2="1089.5" stroke="#252525" stroke-width="2.8"/><line x1="1611.0" y1="1100.0" x2="1616.0" y2="1100.0" stroke="#252525" stroke-width="2.8"/><line x1="1610.1" y1="1109.6" x2="1615.0" y2="1110.5" stroke="#252525" stroke-width="2.8"/><line x1="1607.3" y1="1118.8" x2="1611.9" y2="1120.7" stroke="#252525" stroke-width="2.8"/><line x1="1602.7" y1="1127.2" x2="1606.9" y2="1130.0" stroke="#252525" stroke-width="2.8"/><line x1="1596.6" y1="1134.6" x2="1600.2" y2="1138.2" stroke="#252525" stroke-width="2.8"/><polygon points="754.5,33.5 799.5,33.5 788,71 745,71" fill="#a4a4a4"/><g transform="translate(0,71) skewX(-15) translate(0,-71)"><rect x="751" y="43" width="32" height="21" rx="8" fill="#12121c"/><rect x="760" y="48.5" width="20" height="3" fill="#a4a4a4"/><rect x="760.5" y="56.5" width="26" height="3.2" fill="#a4a4a4"/></g><g transform="translate(0,68) skewX(-17) translate(0,-68)" fill="#a8a8a8"><polygon points="797,68 797,42 807,42 817.5,54 828,42 838,42 838,68 831,68 831,53 820,65 815,65 804,53 804,68"/><path fill-rule="evenodd" d="M846,42 L866,42 Q872,42 872,48 L872,62 Q872,68 866,68 L846,68 Q840,68 840,62 L840,48 Q840,42 846,42 Z M848,48.5 L864,48.5 L864,61 L848,61 Z"/><rect x="880.5" y="42" width="1.8" height="28" fill="#555"/><g fill="none" stroke="#8a8a8a" stroke-width="1.5"><path d="M888,43 L902,43 Q905.5,43 905.5,47 L905.5,63 Q905.5,67 902,67 L888,67 Z"/><path d="M892.5,48 L900.5,48 L900.5,62 L892.5,62 Z" stroke-width="1.2"/><path d="M923,43 L908,43 L908,56 L918,56 L918,62 L908,62 L908,67 L923,67 L923,51 L913,51 L913,48 L923,48 Z" stroke-width="1.3"/></g></g><rect x="538" y="93.5" width="513.5" height="513.5" fill="#000" stroke="#000" stroke-width="3"/><defs><linearGradient id="rg" x1="0" y1="0" x2="0" y2="1"><stop offset="0" stop-color="#a20000"/><stop offset="1" stop-color="#680000"/></linearGradient><linearGradient id="pg" x1="0" y1="0" x2="0" y2="1"><stop offset="0" stop-color="#3a0040"/><stop offset="1" stop-color="#6a0078"/></linearGradient><linearGradient id="mg" x1="0" y1="0" x2="1" y2="0"><stop offset="0" stop-color="#2a2a2a"/><stop offset=".5" stop-color="#343434"/><stop offset="1" stop-color="#2a2a2a"/></linearGradient></defs><rect x="540" y="95" width="510" height="149" fill="url(#rg)"/><line x1="641.5" y1="95" x2="641.5" y2="606" stroke="#fff" stroke-opacity=".2" stroke-width="2"/><line x1="742.5" y1="95" x2="742.5" y2="606" stroke="#fff" stroke-opacity=".2" stroke-width="2"/><line x1="843.8" y1="95" x2="843.8" y2="606" stroke="#fff" stroke-opacity=".2" stroke-width="2"/><line x1="945" y1="95" x2="945" y2="606" stroke="#fff" stroke-opacity=".2" stroke-width="2"/><line x1="575" y1="197.5" x2="1050" y2="197.5" stroke="#fff" stroke-opacity=".2" stroke-width="2"/><line x1="575" y1="299" x2="1050" y2="299" stroke="#fff" stroke-opacity=".2" stroke-width="2"/><line x1="575" y1="400" x2="1050" y2="400" stroke="#fff" stroke-opacity=".2" stroke-width="2"/><line x1="575" y1="501" x2="1050" y2="501" stroke="#fff" stroke-opacity=".2" stroke-width="2"/><line x1="641.5" y1="95" x2="641.5" y2="244" stroke="#ff4040" stroke-opacity=".18" stroke-width="2"/><line x1="742.5" y1="95" x2="742.5" y2="244" stroke="#ff4040" stroke-opacity=".18" stroke-width="2"/><line x1="843.8" y1="95" x2="843.8" y2="244" stroke="#ff4040" stroke-opacity=".18" stroke-width="2"/><line x1="945" y1="95" x2="945" y2="244" stroke="#ff4040" stroke-opacity=".18" stroke-width="2"/><line x1="575" y1="197.5" x2="1050" y2="197.5" stroke="#ff4040" stroke-opacity=".18" stroke-width="2"/><text x="0" y="0" font-family="Liberation Sans" font-size="21" letter-spacing="0.5" fill="#c04040" transform="translate(542.5,202.5) scale(.86,1.02)">-20</text><text x="0" y="0" font-family="Liberation Sans" font-size="21" letter-spacing="0.5" fill="#9a9a9a" transform="translate(542.5,304) scale(.86,1.02)">-40</text><text x="0" y="0" font-family="Liberation Sans" font-size="21" letter-spacing="0.5" fill="#9a9a9a" transform="translate(542.5,405) scale(.86,1.02)">-60</text><text x="0" y="0" font-family="Liberation Sans" font-size="21" letter-spacing="0.5" fill="#9a9a9a" transform="translate(542.5,506) scale(.86,1.02)">-80</text><rect x="539" y="94.5" width="511.5" height="512" fill="none" stroke="#4a4a4a" stroke-width="1.6"/><rect x="540" y="95" width="510" height="1.5" fill="#c02020"/><rect x="540" y="241.5" width="510" height="4" fill="#d41010"/><rect x="540.5" y="233" width="22" height="27.5" fill="#e82030"/><path d="M835.2,606 L835.8,320" stroke="#f0f040" stroke-width="2.4" fill="none"/><path d="M848,297 L874,272" stroke="#f0f040" stroke-width="2.6" fill="none"/><path d="M898,257 L908,252" stroke="#f0f040" stroke-width="2.6" fill="none"/><path d="M937,238.5 Q944,233 952,225 L1044,137.5" stroke="#f3921e" stroke-width="2.4" fill="none"/><g transform="rotate(-20 921.5 246)"><rect x="904" y="241" width="35" height="10" fill="#1a7a9a"/><rect x="904" y="244.5" width="35" height="2.5" fill="#30b8b0"/></g><circle cx="885.6" cy="263" r="16.2" fill="#f06a1c"/><circle cx="839.5" cy="303.8" r="16" fill="#0c66ff"/><text x="639" y="627.5" text-anchor="middle" font-family="Liberation Sans" font-size="20" letter-spacing="2" fill="#9c9c9c">-80</text><text x="738" y="627.5" text-anchor="middle" font-family="Liberation Sans" font-size="20" letter-spacing="2" fill="#9c9c9c">-60</text><text x="840" y="627.5" text-anchor="middle" font-family="Liberation Sans" font-size="20" letter-spacing="2" fill="#9c9c9c">-40</text><text x="942" y="627.5" text-anchor="middle" font-family="Liberation Sans" font-size="20" letter-spacing="2" fill="#9c9c9c">-20</text><text x="1047" y="627.5" text-anchor="middle" font-family="Liberation Sans" font-size="20" letter-spacing="2" fill="#9c9c9c">0</text><rect x="451.5" y="94.5" width="39" height="513" fill="#080808"/><rect x="453" y="96" width="36" height="510" fill="#323232"/><rect x="512.5" y="94.5" width="20" height="513" fill="#080808"/><rect x="514" y="96" width="17" height="510" fill="#323232"/><rect x="514" y="256" width="17" height="350" fill="#00c400"/><defs><linearGradient id="dg" x1="0" y1="0" x2="0" y2="1"><stop offset="0" stop-color="#12a018"/><stop offset=".5" stop-color="#0a7e0e"/><stop offset="1" stop-color="#0e9412"/></linearGradient></defs><rect x="514" y="312" width="17" height="80" fill="url(#dg)"/><rect x="509.5" y="307" width="25" height="5" fill="#18c038"/><rect x="509.5" y="390.5" width="25" height="5" fill="#c42020"/><text x="471" y="209.5" text-anchor="middle" font-family="Liberation Sans" font-weight="bold" font-size="20" fill="#a8a8a8">6</text><text x="471" y="308.5" text-anchor="middle" font-family="Liberation Sans" font-weight="bold" font-size="20" fill="#a8a8a8">12</text><text x="471" y="411.5" text-anchor="middle" font-family="Liberation Sans" font-weight="bold" font-size="20" fill="#a8a8a8">18</text><text x="471" y="514.5" text-anchor="middle" font-family="Liberation Sans" font-weight="bold" font-size="20" fill="#a8a8a8">24</text><rect x="1059.5" y="94.5" width="20" height="513" fill="#080808"/><rect x="1061" y="96" width="17" height="510" fill="#323232"/><rect x="1061" y="241" width="17" height="365" fill="#00c400"/><rect x="1105.5" y="94.5" width="39" height="513" fill="#080808"/><rect x="1107" y="96" width="36" height="510" fill="#323232"/><rect x="1107" y="96" width="36" height="69" fill="#d2601e"/><rect x="1107" y="165" width="36" height="32" fill="#e01010"/><text x="1125" y="210.5" text-anchor="middle" font-family="Liberation Sans" font-weight="bold" font-size="20" fill="#a8a8a8">6</text><text x="1125" y="308.5" text-anchor="middle" font-family="Liberation Sans" font-weight="bold" font-size="20" fill="#a8a8a8">12</text><text x="1125" y="411.5" text-anchor="middle" font-family="Liberation Sans" font-weight="bold" font-size="20" fill="#a8a8a8">18</text><text x="1125" y="514.5" text-anchor="middle" font-family="Liberation Sans" font-weight="bold" font-size="20" fill="#a8a8a8">24</text><rect x="1170.5" y="94.5" width="20" height="513" fill="#080808"/><rect x="1172" y="96" width="17" height="510" fill="#323232"/><rect x="1191.5" y="94.5" width="20" height="513" fill="#080808"/><rect x="1193" y="96" width="17" height="510" fill="#323232"/><rect x="1172" y="228" width="17" height="378" fill="#00c400"/><rect x="1193" y="228" width="17" height="378" fill="#00c400"/><text x="0" y="0" font-family="Liberation Sans" font-size="20" letter-spacing="2" fill="#9c9c9c" transform="translate(1221.5,105) scale(.9,1)">0</text><text x="0" y="0" font-family="Liberation Sans" font-size="20" letter-spacing="2" fill="#9c9c9c" transform="translate(1213.5,204) scale(.9,1)">-20</text><text x="0" y="0" font-family="Liberation Sans" font-size="20" letter-spacing="2" fill="#9c9c9c" transform="translate(1213.5,304) scale(.9,1)">-40</text><text x="0" y="0" font-family="Liberation Sans" font-size="20" letter-spacing="2" fill="#9c9c9c" transform="translate(1213.5,405) scale(.9,1)">-60</text><text x="0" y="0" font-family="Liberation Sans" font-size="20" letter-spacing="2" fill="#9c9c9c" transform="translate(1213.5,505) scale(.9,1)">-80</text><rect x="471" y="647" width="736" height="193" fill="#000"/><path d="M880,680 C884.2,680.2 895.8,680.0 905.0,681.0 C914.2,682.0 925.0,682.8 935.0,686.0 C945.0,689.2 955.8,694.8 965.0,700.0 C974.2,705.2 981.7,711.5 990.0,717.5 C998.3,723.5 1008.3,731.4 1015.0,736.0 C1021.7,740.6 1022.5,742.2 1030.0,745.0 C1037.5,747.8 1050.0,751.2 1060.0,753.0 C1070.0,754.8 1076.7,755.2 1090.0,756.0 C1103.3,756.8 1121.2,757.5 1140.0,758.0 C1158.8,758.5 1192.5,758.8 1203.0,759.0 L1203,680 Z" fill="url(#pg)"/><line x1="548" y1="647" x2="548" y2="840" stroke="#fff" stroke-opacity=".2" stroke-width="1.8"/><line x1="689" y1="647" x2="689" y2="840" stroke="#fff" stroke-opacity=".2" stroke-width="1.8"/><line x1="827.5" y1="647" x2="827.5" y2="840" stroke="#fff" stroke-opacity=".2" stroke-width="1.8"/><line x1="934.5" y1="647" x2="934.5" y2="840" stroke="#fff" stroke-opacity=".2" stroke-width="1.8"/><line x1="1037.5" y1="647" x2="1037.5" y2="840" stroke="#fff" stroke-opacity=".2" stroke-width="1.8"/><line x1="1160.75" y1="647" x2="1160.75" y2="840" stroke="#fff" stroke-opacity=".2" stroke-width="1.8"/><line x1="471" y1="718" x2="1207" y2="718" stroke="#fff" stroke-opacity=".2" stroke-width="1.8"/><line x1="471" y1="760" x2="1207" y2="760" stroke="#fff" stroke-opacity=".2" stroke-width="1.8"/><line x1="471" y1="800" x2="1207" y2="800" stroke="#fff" stroke-opacity=".2" stroke-width="1.8"/><path d="M880,680 C884.2,680.2 895.8,680.0 905.0,681.0 C914.2,682.0 925.0,682.8 935.0,686.0 C945.0,689.2 955.8,694.8 965.0,700.0 C974.2,705.2 981.7,711.5 990.0,717.5 C998.3,723.5 1008.3,731.4 1015.0,736.0 C1021.7,740.6 1022.5,742.2 1030.0,745.0 C1037.5,747.8 1050.0,751.2 1060.0,753.0 C1070.0,754.8 1076.7,755.2 1090.0,756.0 C1103.3,756.8 1121.2,757.5 1140.0,758.0 C1158.8,758.5 1192.5,758.8 1203.0,759.0" stroke="#a010b0" stroke-width="2.6" fill="none"/><rect x="471" y="647" width="736" height="193" fill="none" stroke="#5a5a5a" stroke-width="2"/><path d="M542.5,837 C545.4,830.8 553.3,812.8 560.0,800.0 C566.7,787.2 574.6,772.9 582.5,760.0 C590.4,747.1 598.3,733.0 607.5,722.5 C616.7,712.0 627.1,703.4 637.5,697.0 C647.9,690.6 661.2,686.7 670.0,684.0 C678.8,681.3 680.8,681.5 690.0,680.8 C699.2,680.1 719.2,680.1 725.0,680.0" stroke="#f06a24" stroke-width="2.6" fill="none"/><path d="M561.0,836.1 L564.0,829.3 L567.0,822.6 L570.0,816.1 L573.0,809.8 L576.0,803.6 L579.0,797.6 L582.0,791.7 L585.0,786.0 L588.0,780.5 L591.0,775.1 L594.0,769.9 L597.0,764.8 L600.0,760.0 L603.0,755.2 L606.0,750.7 L609.0,746.3 L612.0,742.0 L615.0,738.0 L618.0,734.0 L621.0,730.3 L624.0,726.7 L627.0,723.3 L630.0,720.0 L633.0,716.9 L636.0,713.9 L639.0,711.2 L642.0,708.5 L645.0,706.1 L648.0,703.8 L651.0,701.7 L654.0,699.7 L657.0,697.9 L660.0,696.2 L663.0,694.8 L666.0,693.4 L669.0,692.3 L672.0,691.3 L675.0,690.4 L678.0,689.8 L681.0,689.2 L684.0,688.9 L687.0,688.7 L690.0,688.7 L693.0,688.8 L696.0,689.1 L699.0,689.6 L702.0,690.2 L705.0,691.0 L708.0,691.9 L711.0,693.0 L714.0,694.3 L717.0,695.7 L720.0,697.3 L723.0,699.1 L726.0,701.0 L729.0,703.1 L732.0,705.3 L735.0,707.7 L738.0,710.3 L741.0,713.0 L744.0,715.9 L747.0,718.9 L750.0,722.2 L753.0,725.5 L756.0,729.1 L759.0,732.8 L762.0,736.6 L765.0,740.7 L768.0,744.8 L771.0,749.2 L774.0,753.7 L777.0,758.4 L780.0,763.2 L783.0,768.2 L786.0,773.3 L789.0,778.7 L792.0,784.1 L795.0,789.8 L798.0,795.6 L801.0,801.6 L804.0,807.7 L807.0,814.0 L810.0,820.4 L813.0,827.1 L816.0,833.8" stroke="#2a66ee" stroke-width="2.6" fill="none"/><path d="M474,680 L1203,680" stroke="#9a38b8" stroke-width="2.6" fill="none"/><circle cx="1045" cy="749" r="16" fill="#8060d0"/><text x="0" y="0" font-family="Liberation Sans" font-size="20" letter-spacing="3" fill="#9c9c9c" transform="translate(453.5,687) scale(.9,1)">0</text><text x="0" y="0" font-family="Liberation Sans" font-size="20" letter-spacing="3" fill="#9c9c9c" transform="translate(1217.5,687) scale(.9,1)">0</text><text x="0" y="0" font-family="Liberation Sans" font-size="20" letter-spacing="3" fill="#9c9c9c" transform="translate(443,767) scale(.9,1)">-6</text><text x="0" y="0" font-family="Liberation Sans" font-size="20" letter-spacing="3" fill="#9c9c9c" transform="translate(1218.5,767) scale(.9,1)">-6</text><text x="0" y="0" font-family="Liberation Sans" font-size="20" letter-spacing="3" fill="#9c9c9c" transform="translate(432,847) scale(.9,1)">-12</text><text x="0" y="0" font-family="Liberation Sans" font-size="20" letter-spacing="3" fill="#9c9c9c" transform="translate(1216,847) scale(.9,1)">-12</text><text x="547" y="864.5" text-anchor="middle" font-family="Liberation Sans" font-weight="bold" font-size="20" fill="#9c9c9c">32</text><text x="688" y="864.5" text-anchor="middle" font-family="Liberation Sans" font-weight="bold" font-size="20" fill="#9c9c9c">128</text><text x="827" y="864.5" text-anchor="middle" font-family="Liberation Sans" font-weight="bold" font-size="20" fill="#9c9c9c">500</text><text x="937" y="864.5" text-anchor="middle" font-family="Liberation Sans" font-weight="bold" font-size="20" fill="#9c9c9c">1.5K</text><text x="1037" y="864.5" text-anchor="middle" font-family="Liberation Sans" font-weight="bold" font-size="20" fill="#9c9c9c">4K</text><text x="1160" y="864.5" text-anchor="middle" font-family="Liberation Sans" font-weight="bold" font-size="20" fill="#9c9c9c">14K</text></svg><div style="position:absolute;left:108.0px;top:25.0px;width:200px;height:110px;background:radial-gradient(ellipse closest-side,rgba(40,110,255,0.22),rgba(40,110,255,0))"></div><div style="position:absolute;left:218.0px;top:145.0px;width:180px;height:90px;background:radial-gradient(ellipse closest-side,rgba(40,110,255,0.12),rgba(40,110,255,0))"></div><div style="position:absolute;left:1360.0px;top:25.0px;width:200px;height:110px;background:radial-gradient(ellipse closest-side,rgba(255,120,30,0.2),rgba(255,120,30,0))"></div><div style="position:absolute;left:1475.0px;top:187.0px;width:170px;height:70px;background:radial-gradient(ellipse closest-side,rgba(255,120,30,0.12),rgba(255,120,30,0))"></div><div style="position:absolute;left:1475.0px;top:411.0px;width:170px;height:70px;background:radial-gradient(ellipse closest-side,rgba(255,120,30,0.12),rgba(255,120,30,0))"></div><div style="position:absolute;left:62.0px;top:625.0px;width:170px;height:70px;background:radial-gradient(ellipse closest-side,rgba(40,220,60,0.1),rgba(40,220,60,0))"></div><div style="position:absolute;left:1296.0px;top:621.0px;width:150px;height:70px;background:radial-gradient(ellipse closest-side,rgba(40,220,60,0.1),rgba(40,220,60,0))"></div><div style="position:absolute;left:108.0px;top:875.0px;width:200px;height:110px;background:radial-gradient(ellipse closest-side,rgba(20,210,230,0.2),rgba(20,210,230,0))"></div><div style="position:absolute;left:558.0px;top:875.0px;width:200px;height:110px;background:radial-gradient(ellipse closest-side,rgba(140,90,255,0.2),rgba(140,90,255,0))"></div><div style="position:absolute;left:972.0px;top:875.0px;width:200px;height:110px;background:radial-gradient(ellipse closest-side,rgba(255,30,40,0.2),rgba(255,30,40,0))"></div><div class="b blue" style="left:152.5px;top:35px;width:110.5px;height:41px;font-size:25px;line-height:36.5px">GATE</div><div class="led " style="left:304px;top:46px"></div><div class="led " style="left:333px;top:46px"></div><div class="led gn" style="left:362px;top:46px"></div><div class="t" style="left:-30px;top:108.0px;width:300px;text-align:center;font-size:20.6px;font-weight:bold;color:#bcbcbc;-webkit-text-stroke:0.35px #bcbcbc;text-shadow:0 0 1px #000,0 1px 1px #000;">OPEN</div><div class="t" style="left:-30px;top:133.0px;width:300px;text-align:center;font-size:20.6px;font-weight:bold;color:#bcbcbc;-webkit-text-stroke:0.35px #bcbcbc;text-shadow:0 0 1px #000,0 1px 1px #000;">THRESHOLD</div><div class="vbf" style="left:64.3px;top:161px;width:110.00000000000001px;height:43px;font-size:29px;line-height:37px;">-42.0</div><div class="ks" style="left:75.8px;top:233px;width:86px;height:88px"></div><div class="kn" style="left:74.8px;top:225px;width:88px;height:88px"></div><div class="kp" style="left:115.8px;top:226px;height:43px;transform:rotate(82deg)"></div><div class="t" style="left:158px;top:107.0px;width:300px;text-align:center;font-size:20.6px;font-weight:bold;color:#bcbcbc;word-spacing:-3px;text-shadow:0 0 1px #000,0 1px 1px #000;">GATE / EXP</div><div class="b blue" style="left:253px;top:142px;width:110px;height:40.5px;font-size:25px;line-height:36.0px">GATE</div><div class="b off" style="left:253px;top:197px;width:110px;height:40px;font-size:25px;line-height:38px">EXP</div><div class="t" style="left:158px;top:269.5px;width:300px;text-align:center;font-size:20.6px;font-weight:bold;color:#bcbcbc;-webkit-text-stroke:0.35px #bcbcbc;text-shadow:0 0 1px #000,0 1px 1px #000;">CLOSE</div><div class="vb" style="left:253px;top:297.5px;width:110px;height:40.5px;font-size:29px;line-height:33.5px;">-16.0</div><div class="t" style="left:-30px;top:364.5px;width:300px;text-align:center;font-size:20.6px;font-weight:bold;color:#bcbcbc;-webkit-text-stroke:0.35px #bcbcbc;text-shadow:0 0 1px #000,0 1px 1px #000;">ATTACK</div><div class="vb" style="left:64.5px;top:392px;width:110.0px;height:40px;font-size:29px;line-height:33px;">1.00</div><div class="t" style="left:158px;top:364.5px;width:300px;text-align:center;font-size:20.6px;font-weight:bold;color:#bcbcbc;-webkit-text-stroke:0.35px #bcbcbc;text-shadow:0 0 1px #000,0 1px 1px #000;">RELEASE</div><div class="vb" style="left:253px;top:392px;width:110px;height:40px;font-size:29px;line-height:33px;">100.0</div><div class="t" style="left:-30px;top:457.5px;width:300px;text-align:center;font-size:20.6px;font-weight:bold;color:#bcbcbc;-webkit-text-stroke:0.35px #bcbcbc;text-shadow:0 0 1px #000,0 1px 1px #000;">HOLD</div><div class="vb" style="left:64.5px;top:486px;width:110.0px;height:41px;font-size:29px;line-height:34px;">0</div><div class="t" style="left:158px;top:457.5px;width:300px;text-align:center;font-size:20.6px;font-weight:bold;color:#bcbcbc;-webkit-text-stroke:0.35px #bcbcbc;text-shadow:0 0 1px #000,0 1px 1px #000;">FLOOR</div><div class="vb" style="left:253px;top:486px;width:110px;height:41px;font-size:29px;line-height:34px;">-Inf</div><div class="t" style="left:32.5px;top:559.2px;width:300px;text-align:center;font-size:20.6px;font-weight:bold;color:#bcbcbc;-webkit-text-stroke:0.35px #bcbcbc;text-shadow:0 0 1px #000,0 1px 1px #000;">KEY</div><div class="spk" style="left:216px;top:549.5px;width:48px;height:39px"></div><div class="t" style="left:-28px;top:598.0px;width:300px;text-align:center;font-size:20.6px;font-weight:bold;color:#bcbcbc;-webkit-text-stroke:0.35px #bcbcbc;text-shadow:0 0 1px #000,0 1px 1px #000;">SOURCE</div><div class="b green" style="left:92px;top:633px;width:109.5px;height:41px;font-size:25px;line-height:36.5px">INT</div><div class="b off" style="left:226px;top:633px;width:109px;height:41px;font-size:25px;line-height:39px">EXT</div><div class="b blue" style="left:93px;top:697px;width:53px;height:43.5px;font-size:22px;line-height:39.0px"></div><div class="b blue" style="left:284.5px;top:697px;width:51.5px;height:43.5px;font-size:22px;line-height:39.0px"></div><div class="b blue" style="left:190px;top:737.5px;width:49.5px;height:38.5px;font-size:22px;line-height:34.0px"></div><div class="t" style="left:-30px;top:756.0px;width:300px;text-align:center;font-size:20.6px;font-weight:bold;color:#bcbcbc;-webkit-text-stroke:0.35px #bcbcbc;text-shadow:0 0 1px #000,0 1px 1px #000;">HPF</div><div class="t" style="left:158.5px;top:756.0px;width:300px;text-align:center;font-size:20.6px;font-weight:bold;color:#bcbcbc;-webkit-text-stroke:0.35px #bcbcbc;text-shadow:0 0 1px #000,0 1px 1px #000;">LPF</div><div class="vb" style="left:64.5px;top:784px;width:110.0px;height:40px;font-size:29px;line-height:33px;">72</div><div class="vb" style="left:253px;top:784px;width:109.5px;height:40px;font-size:29px;line-height:33px;">239</div><div class="b orange" style="left:1404px;top:37px;width:111px;height:39.5px;font-size:25px;line-height:35.0px">COMP</div><div class="t" style="left:1220.5px;top:118.5px;width:300px;text-align:center;font-size:20.6px;font-weight:bold;color:#bcbcbc;-webkit-text-stroke:0.35px #bcbcbc;text-shadow:0 0 1px #000,0 1px 1px #000;">THRESHOLD</div><div class="vbf" style="left:1316.0px;top:147.5px;width:110.0px;height:43.0px;font-size:29px;line-height:37.0px;">-32.0</div><div class="ks" style="left:1327.5px;top:219.5px;width:86px;height:88px"></div><div class="kn" style="left:1326.5px;top:211.5px;width:88px;height:88px"></div><div class="kp" style="left:1367.5px;top:212.5px;height:43px;transform:rotate(-66deg)"></div><div class="t" style="left:1410px;top:119.0px;width:300px;text-align:center;font-size:20.6px;font-weight:bold;color:#bcbcbc;-webkit-text-stroke:0.35px #bcbcbc;text-shadow:0 0 1px #000,0 1px 1px #000;">KNEE</div><div class="b off" style="left:1505.5px;top:147.5px;width:108.5px;height:38.5px;font-size:22.5px;line-height:36.5px">SOFT</div><div class="b orange" style="left:1505.5px;top:201px;width:109.5px;height:40px;font-size:22.5px;line-height:35.5px">NORMAL</div><div class="b off" style="left:1505.5px;top:256px;width:108.5px;height:39px;font-size:22.5px;line-height:37px">HARD</div><div class="t" style="left:1220px;top:335.0px;width:300px;text-align:center;font-size:20.6px;font-weight:bold;color:#bcbcbc;-webkit-text-stroke:0.35px #bcbcbc;text-shadow:0 0 1px #000,0 1px 1px #000;">ATTACK</div><div class="vb" style="left:1315px;top:363.75px;width:108.75px;height:38.75px;font-size:29px;line-height:31.75px;">7.00</div><div class="t" style="left:1220px;top:442.0px;width:300px;text-align:center;font-size:20.6px;font-weight:bold;color:#bcbcbc;-webkit-text-stroke:0.35px #bcbcbc;text-shadow:0 0 1px #000,0 1px 1px #000;">RATIO</div><div class="vb" style="left:1315px;top:470.5px;width:108.75px;height:38.25px;font-size:29px;line-height:31.25px;">3.00</div><div class="t" style="left:1410.5px;top:335.0px;width:300px;text-align:center;font-size:20.6px;font-weight:bold;color:#bcbcbc;-webkit-text-stroke:0.35px #bcbcbc;text-shadow:0 0 1px #000,0 1px 1px #000;">RELEASE</div><div class="vb" style="left:1505.5px;top:363.75px;width:108.5px;height:38.75px;font-size:29px;line-height:31.75px;">220.0</div><div class="b orange" style="left:1505.5px;top:426px;width:109.5px;height:39px;font-size:22.5px;line-height:34.5px">MANUAL</div><div class="b off" style="left:1505.5px;top:480.5px;width:108.5px;height:39.0px;font-size:22.5px;line-height:37.0px">AUTO</div><div class="t" style="left:1279px;top:559.2px;width:300px;text-align:center;font-size:20.6px;font-weight:bold;color:#bcbcbc;-webkit-text-stroke:0.35px #bcbcbc;text-shadow:0 0 1px #000,0 1px 1px #000;">KEY</div><div class="spk" style="left:1466px;top:549.5px;width:48px;height:39px"></div><div class="t" style="left:1222px;top:597.0px;width:300px;text-align:center;font-size:20.6px;font-weight:bold;color:#bcbcbc;-webkit-text-stroke:0.35px #bcbcbc;text-shadow:0 0 1px #000,0 1px 1px #000;">SOURCE</div><div class="b green" style="left:1329px;top:629.5px;width:85px;height:40.0px;font-size:25px;line-height:35.5px">INT</div><div class="b off" style="left:1421.75px;top:629.5px;width:83.75px;height:40.0px;font-size:25px;line-height:38.0px">DeS</div><div class="b off" style="left:1513.5px;top:629.5px;width:84.5px;height:40.0px;font-size:25px;line-height:38.0px">EXT</div><div class="b orange" style="left:1341.75px;top:697px;width:52.0px;height:43px;font-size:22px;line-height:38.5px"></div><div class="b black" style="left:1534px;top:698px;width:51.5px;height:41px;font-size:22px;line-height:39px"></div><div class="b black" style="left:1440px;top:738px;width:49.5px;height:39px;font-size:22px;line-height:37px"></div><div class="t" style="left:1220px;top:756.0px;width:300px;text-align:center;font-size:20.6px;font-weight:bold;color:#bcbcbc;-webkit-text-stroke:0.35px #bcbcbc;text-shadow:0 0 1px #000,0 1px 1px #000;">HPF</div><div class="t" style="left:1410.5px;top:756.0px;width:300px;text-align:center;font-size:20.6px;font-weight:bold;color:#bcbcbc;-webkit-text-stroke:0.35px #bcbcbc;text-shadow:0 0 1px #000,0 1px 1px #000;">LPF</div><div class="vb" style="left:1315px;top:784px;width:108.75px;height:39.75px;font-size:29px;line-height:32.75px;">60</div><div class="vb" style="left:1505.5px;top:784px;width:108.75px;height:39.75px;font-size:29px;line-height:32.75px;">15000</div><div class="b cyan" style="left:153px;top:887px;width:110px;height:41px;font-size:25px;line-height:36.5px">LVL</div><div class="t" style="left:-31px;top:963.0px;width:300px;text-align:center;font-size:20.6px;font-weight:bold;color:#bcbcbc;-webkit-text-stroke:0.35px #bcbcbc;text-shadow:0 0 1px #000,0 1px 1px #000;">THRESHOLD</div><div class="vbf" style="left:64.5px;top:992px;width:110.0px;height:43px;font-size:29px;line-height:37px;">-27.2</div><div class="ks" style="left:76px;top:1064px;width:86px;height:88px"></div><div class="kn" style="left:75px;top:1056px;width:88px;height:88px"></div><div class="kp" style="left:116px;top:1057px;height:43px;transform:rotate(-31deg)"></div><div class="t" style="left:158px;top:964.0px;width:300px;text-align:center;font-size:20.6px;font-weight:bold;color:#bcbcbc;-webkit-text-stroke:0.35px #bcbcbc;text-shadow:0 0 1px #000,0 1px 1px #000;">RANGE</div><div class="vb" style="left:253.5px;top:992px;width:109.0px;height:39px;font-size:29px;line-height:32px;">6.0</div><div class="b purple" style="left:603px;top:887px;width:111px;height:41px;font-size:21px;line-height:36.5px">DeESSER</div><div class="t" style="left:374.5px;top:963.0px;width:300px;text-align:center;font-size:20.6px;font-weight:bold;color:#bcbcbc;-webkit-text-stroke:0.35px #bcbcbc;text-shadow:0 0 1px #000,0 1px 1px #000;">THRESHOLD</div><div class="vbf" style="left:470.0px;top:992px;width:110.0px;height:43px;font-size:29px;line-height:37px;">-9.6</div><div class="ks" style="left:481.5px;top:1064px;width:86px;height:88px"></div><div class="kn" style="left:480.5px;top:1056px;width:88px;height:88px"></div><div class="kp" style="left:521.5px;top:1057px;height:43px;transform:rotate(106deg)"></div><div class="spk" style="left:639.5px;top:991.5px;width:48px;height:39.5px"></div><div class="t" style="left:651px;top:964.0px;width:300px;text-align:center;font-size:20.6px;font-weight:bold;color:#bcbcbc;-webkit-text-stroke:0.35px #bcbcbc;text-shadow:0 0 1px #000,0 1px 1px #000;">FREQ</div><div class="vb" style="left:746.5px;top:992px;width:109.5px;height:39px;font-size:29px;line-height:32px;">4490</div><div class="t" style="left:515px;top:1065.0px;width:300px;text-align:center;font-size:20.6px;font-weight:bold;color:#bcbcbc;-webkit-text-stroke:0.35px #bcbcbc;text-shadow:0 0 1px #000,0 1px 1px #000;">RANGE</div><div class="vb" style="left:610.5px;top:1093px;width:109.0px;height:40px;font-size:29px;line-height:33px;padding-right:10px">-6.0</div><div class="t" style="left:651px;top:1066.5px;width:300px;text-align:center;font-size:20.6px;font-weight:bold;color:#bcbcbc;-webkit-text-stroke:0.35px #bcbcbc;text-shadow:0 0 1px #000,0 1px 1px #000;">TYPE</div><div class="vb" style="left:746.5px;top:1094.5px;width:109.5px;height:39.5px;font-size:29px;line-height:32.5px;"></div><div class="b red" style="left:1017px;top:887px;width:110px;height:41px;font-size:25.5px;line-height:36.5px">LIM</div><div class="t" style="left:854.5px;top:963.0px;width:300px;text-align:center;font-size:20.6px;font-weight:bold;color:#bcbcbc;-webkit-text-stroke:0.35px #bcbcbc;text-shadow:0 0 1px #000,0 1px 1px #000;">THRESHOLD</div><div class="vbf" style="left:950.0px;top:992px;width:110.0px;height:43px;font-size:29px;line-height:37px;">-29.0</div><div class="ks" style="left:961.5px;top:1064px;width:86px;height:88px"></div><div class="kn" style="left:960.5px;top:1056px;width:88px;height:88px"></div><div class="kp" style="left:1001.5px;top:1057px;height:43px;transform:rotate(-40deg)"></div><div class="t" style="left:1012px;top:964.0px;width:300px;text-align:center;font-size:20.6px;font-weight:bold;color:#bcbcbc;-webkit-text-stroke:0.35px #bcbcbc;text-shadow:0 0 1px #000,0 1px 1px #000;">RELEASE</div><div class="vb" style="left:1107.5px;top:992px;width:108.5px;height:39px;font-size:29px;line-height:32px;">100.0</div><div class="t" style="left:1310px;top:890.9px;width:300px;text-align:center;font-size:29px;font-weight:bold;color:#8c8c8c;text-shadow:0 0 1px #000;">OUTPUT</div><div class="t" style="left:1220px;top:963.0px;width:300px;text-align:center;font-size:20.6px;font-weight:bold;color:#bcbcbc;-webkit-text-stroke:0.35px #bcbcbc;text-shadow:0 0 1px #000,0 1px 1px #000;">COMP MIX</div><div class="vbf" style="left:1315.5px;top:992px;width:110.0px;height:43px;font-size:29px;line-height:37px;">70.6</div><div class="ks" style="left:1327px;top:1064px;width:86px;height:88px"></div><div class="kn" style="left:1326px;top:1056px;width:88px;height:88px"></div><div class="kp" style="left:1367px;top:1057px;height:43px;transform:rotate(78deg)"></div><div class="t" style="left:1412px;top:963.0px;width:300px;text-align:center;font-size:20.6px;font-weight:bold;color:#bcbcbc;-webkit-text-stroke:0.35px #bcbcbc;text-shadow:0 0 1px #000,0 1px 1px #000;">MAKEUP</div><div class="vbf" style="left:1507.5px;top:992px;width:110.0px;height:43px;font-size:29px;line-height:37px;">1.7</div><div class="ks" style="left:1519px;top:1064px;width:86px;height:88px"></div><div class="kn" style="left:1518px;top:1056px;width:88px;height:88px"></div><div class="kp" style="left:1559px;top:1057px;height:43px;transform:rotate(20deg)"></div><div class="t vt" style="left:432px;top:96.5px;font-size:18px;">GATE GR</div><div class="t vt" style="left:491.5px;top:96.5px;font-size:18px;">GATE IN</div><div class="t vt" style="left:1080.5px;top:96.5px;font-size:18px;">COMP IN</div><div class="t vt" style="left:1147.5px;top:96.5px;font-size:18px;">LVL COMP LIM GR</div><div class="led" style="left:1172px;top:69px;width:17.5px;height:17px;border-radius:4px"></div><div class="led" style="left:1193px;top:69px;width:17.5px;height:17px;border-radius:4px"></div><svg width="1678" height="1200" style="position:absolute;left:0;top:0"><path d="M231.0,565.0 L237.0,565.0 L246.5,558.0 L246.5,580.0 L237.0,573.0 L231.0,573.0 Z" fill="#a4a4a4"/><path d="M104.66,727.45 L114.2,712.225 L135.4,712.225" fill="none" stroke="#061a40" stroke-width="2.2"/><path d="M294.8,712.225 L315.4,712.225 L324.67,727.45" fill="none" stroke="#061a40" stroke-width="2.2"/><g fill="none" stroke="#0a1530" stroke-width="2.6"><rect x="199.75" y="749.75" width="30" height="13.5" rx="5"/><path d="M210.75,749.75 L210.75,754.75 Q210.75,757.75 213.75,757.75"/><path d="M218.75,763.25 L218.75,758.75 Q218.75,755.75 215.75,755.75"/></g><path d="M1481.0,565.0 L1487.0,565.0 L1496.5,558.0 L1496.5,580.0 L1487.0,573.0 L1481.0,573.0 Z" fill="#a4a4a4"/><path d="M1353.19,727.1 L1362.55,712.05 L1383.35,712.05" fill="none" stroke="#2a1000" stroke-width="2.2"/><path d="M1544.3,712.35 L1564.9,712.35 L1574.17,726.7" fill="none" stroke="#c8c8c8" stroke-width="2.2"/><g fill="none" stroke="#c8c8c8" stroke-width="2.6"><rect x="1449.75" y="750.5" width="30" height="13.5" rx="5"/><path d="M1460.75,750.5 L1460.75,755.5 Q1460.75,758.5 1463.75,758.5"/><path d="M1468.75,764.0 L1468.75,759.5 Q1468.75,756.5 1465.75,756.5"/></g><path d="M654.5,1007.25 L660.5,1007.25 L670.0,1000.25 L670.0,1022.25 L660.5,1015.25 L654.5,1015.25 Z" fill="#a4a4a4"/><path d="M767,1106.5 L797,1106.5 L807,1120.5 L832,1120.5" fill="none" stroke="#e8e8e8" stroke-width="2.6"/></svg></body></html>
